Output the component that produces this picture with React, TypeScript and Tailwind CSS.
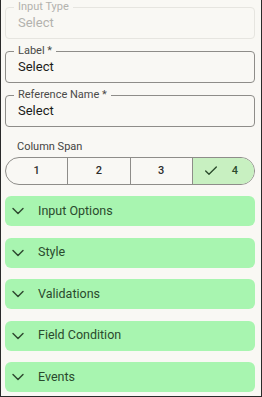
import { Check, ChevronDown } from "lucide-react";

function Field({ label, disabled }: { label: string; disabled?: boolean }) {
  return (
    <fieldset
      className={`h-[39px] rounded-[4px] border px-[8px] ${disabled ? "border-[#e6e5e0]" : "border-[#8e8d89]"}`}
    >
      <legend className={`px-[4px] text-[11px] leading-[14px] ${disabled ? "text-[#b3b2ae]" : "text-[#4a4a48]"}`}>{label}</legend>
      <div className={`px-[4px] text-[13px] leading-[18px] ${disabled ? "text-[#b3b2ae]" : "text-[#1c1c1a]"}`}>Select</div>
    </fieldset>
  );
}

const sections = ["Input Options", "Style", "Validations", "Field Condition", "Events"];

export default function App() {
  return (
    <div className="h-[397px] w-[262px] overflow-hidden border-x border-b border-[#2a2a2a] bg-[#f9f8f4] pl-[4px] pr-[6px] font-['Roboto',sans-serif]">
      <div className="flex flex-col gap-[5px]">
        <Field label="Input Type" disabled />
        <Field label="Label *" />
        <Field label="Reference Name *" />
      </div>

      <p className="mt-[12px] pl-[12px] text-[11px] leading-[16px] text-[#444442]">Column Span</p>
      <div className="mt-[2px] flex h-[28px] overflow-hidden rounded-full border border-[#8e8d89] text-[11px] font-medium text-[#2e2e2c]">
        {["1", "2", "3"].map((n) => (
          <div key={n} className="flex flex-1 items-center justify-center border-r border-[#8e8d89]">{n}</div>
        ))}
        <div className="flex flex-1 items-center justify-center bg-[#c8f0c1] text-[#2b4a2c]">
          <Check size={16} strokeWidth={2} />
          <span className="ml-[13px] mr-[6px]">4</span>
        </div>
      </div>

      <div className="mt-[11px] flex flex-col gap-[11.5px]">
        {sections.map((s) => (
          <div key={s} className="flex h-[30px] items-center rounded-[6px] bg-[#a8f5b0] pl-[3px] text-[12.5px] text-[#2a4a2d]">
            <ChevronDown size={20} strokeWidth={1.75} className="text-[#2f4a31]" />
            <span className="ml-[10px]">{s}</span>
          </div>
        ))}
      </div>
    </div>
  );
}
